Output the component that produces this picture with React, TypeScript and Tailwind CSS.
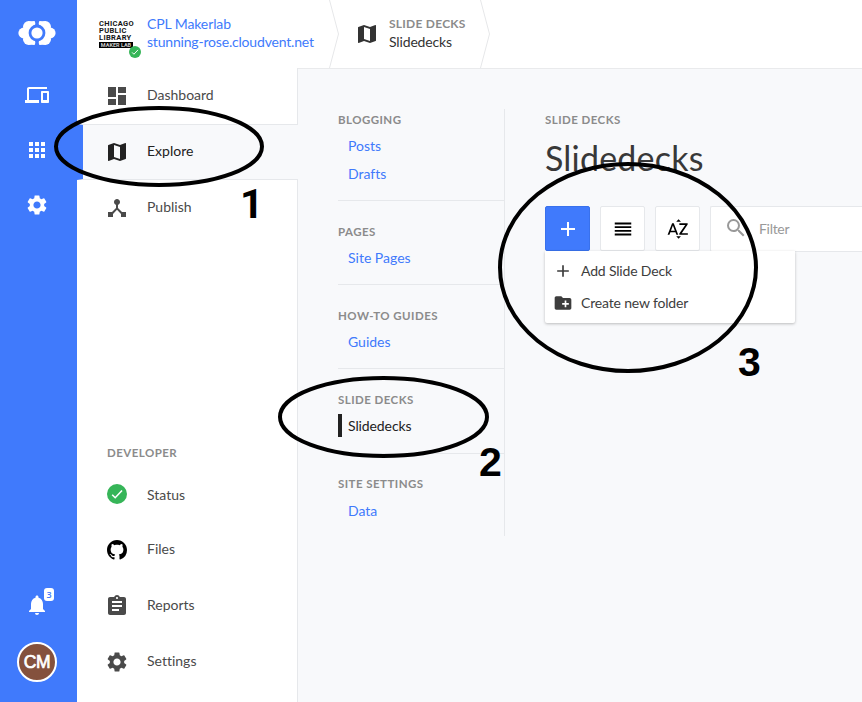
import type { ReactNode } from "react";
import {
  MdAdd,
  MdApps,
  MdAssignment,
  MdCreateNewFolder,
  MdDashboard,
  MdDeviceHub,
  MdDevices,
  MdNotifications,
  MdReorder,
  MdSearch,
  MdSettings,
  MdSortByAlpha,
} from "react-icons/md";

function Logo() {
  return (
    <svg width="38" height="26" viewBox="0 0 38 26">
      <g fill="#fff">
        <circle cx="5.8" cy="13" r="5.4" />
        <circle cx="10.8" cy="6.8" r="5.8" />
        <circle cx="10.8" cy="19.2" r="5.8" />
        <path d="M10 1.4L16.5 1l1.500 2.500L16 7v12l2 3.500-1.500 2.500-6.500-.4L5 13z" />
        <circle cx="32.2" cy="13" r="5.4" />
        <circle cx="27.2" cy="6.8" r="5.8" />
        <circle cx="27.2" cy="19.2" r="5.8" />
        <path d="M28 1.4L21.5 1 20 3.500 22 7v12l-2 3.500 1.500 2.500 6.500-.4L33 13z" />
      </g>
      <circle cx="19" cy="13" r="8.4" fill="#407afc" />
      <path d="M19 0v5M19 21v5" stroke="#407afc" strokeWidth="3.4" />
      <circle cx="19" cy="13" r="5.6" fill="#fff" />
    </svg>
  );
}

function MapIcon() {
  return (
    <svg width="24" height="24" viewBox="0 0 24 24" fill="currentColor" className="shrink-0">
      <path d="M20.5 3l-.16.03L15 5.1 9 3 3.36 4.9c-.21.07-.36.25-.36.48V20.5c0 .28.22.5.5.5l.16-.03L9 18.9l6 2.1 5.64-1.9c.21-.07.36-.25.36-.48V3.5c0-.28-.22-.5-.5-.5zM15 19l-6-2.110V5l6 2.110V19z" />
    </svg>
  );
}

function Github() {
  return (
    <svg width="20" height="20" viewBox="0 0 16 16" fill="#000">
      <path d="M8 0C3.58 0 0 3.58 0 8c0 3.54 2.29 6.53 5.47 7.59.4.07.55-.17.55-.38 0-.19-.01-.82-.01-1.49-2.01.37-2.53-.49-2.69-.94-.09-.23-.48-.94-.82-1.13-.28-.15-.68-.52-.01-.53.63-.01 1.08.58 1.23.82.72 1.21 1.87.87 2.33.66.07-.52.28-.87.51-1.07-1.78-.2-3.64-.89-3.64-3.95 0-.87.31-1.59.82-2.15-.08-.2-.36-1.02.08-2.12 0 0 .67-.21 2.2.82.64-.18 1.32-.27 2-.27s1.36.09 2 .27c1.53-1.04 2.2-.82 2.2-.82.44 1.1.16 1.92.08 2.12.51.56.82 1.27.82 2.15 0 3.07-1.87 3.75-3.65 3.95.29.25.54.73.54 1.48 0 1.07-.01 1.93-.01 2.2 0 .21.15.46.55.38A8.01 8.01 0 0016 8c0-4.42-3.58-8-8-8z" />
    </svg>
  );
}

function Check({ size }: { size: number }) {
  return (
    <svg width={size} height={size} viewBox="0 0 20 20">
      <circle cx="10" cy="10" r="10" fill="#36b558" />
      <path d="M5.2 10.7l3 3 6.8-7.2" fill="none" stroke="#fff" strokeWidth="1.6" />
    </svg>
  );
}

function Rail() {
  return (
    <aside className="flex w-[77px] shrink-0 flex-col items-center bg-[#407afc] pr-[3px] text-white">
      <div className="mt-5 flex h-[26px]"><Logo /></div>
      <MdDevices className="mt-[37px]" size={24} />
      <MdApps className="mt-[31px]" size={24} />
      <MdSettings className="mt-[31px]" size={24} />
      <div className="relative mt-auto mb-[25px]">
        <MdNotifications size={24} />
        <span className="absolute -top-[5px] left-[19px] flex h-[13px] w-[10px] items-center justify-center rounded-[3px] bg-white font-['Open_Sans',sans-serif] text-[9px] font-semibold text-[#407afc]">3</span>
      </div>
      <div className="mb-5 flex size-10 items-center justify-center rounded-full border-2 border-white bg-[#84513d] font-['Liberation_Sans',sans-serif] text-[17.5px] tracking-[-0.4px] [-webkit-text-stroke:0.7px_white]">CM</div>
    </aside>
  );
}

function Chevron() {
  return (
    <svg width="11" height="68" viewBox="0 0 11 68" className="shrink-0">
      <path d="M.5 0l9 34-9 34" fill="none" stroke="#e6e7e9" />
    </svg>
  );
}

function Header() {
  return (
    <header className="flex h-[69px] shrink-0 border-b border-[#e9eaec] bg-white">
      <div className="relative ml-[22px] w-12 pt-[19.5px] font-['Roboto',sans-serif] text-[7.5px] leading-[7.2px] font-bold tracking-[0.35px] text-[#151515]">
        <div>CHICAGO</div>
        <div>PUBLIC</div>
        <div>LIBRARY</div>
        <div className="mt-px w-[34px] bg-black text-center text-[5.5px] leading-[6px] tracking-normal whitespace-nowrap text-[#ccc]">MAKER LAB</div>
        <div className="absolute top-[46px] left-[30px]"><Check size={12} /></div>
      </div>
      <div className="w-[182px] pt-[15px] text-[14px] leading-[18px] text-[#407afc]">
        <div className="tracking-[-0.1px]">CPL Makerlab</div>
        <div className="tracking-[-0.19px]">stunning-rose.cloudvent.net</div>
      </div>
      <Chevron />
      <div className="mt-[22px] ml-[15px] text-[#333]"><MapIcon /></div>
      <div className="ml-[10px] w-[91px] pt-[15px] leading-[18px]">
        <div className="text-[12px] font-bold tracking-[0.25px] text-[#8b8b8b]">SLIDE DECKS</div>
        <div className="text-[14px] tracking-[-0.15px] text-[#333]">Slidedecks</div>
      </div>
      <Chevron />
    </header>
  );
}

function NavItem({ icon, label, active }: { icon: ReactNode; label: string; active?: boolean }) {
  return (
    <div
      className={
        active
          ? "flex h-14 items-center border-y border-l-[6px] border-y-[#e6e8eb] border-l-[#407afc] bg-[#f8f9fb] pl-[22px] text-[#222]"
          : "flex h-14 items-center border-r border-[#e6e8eb] pl-7 text-[#4a4a4a]"
      }
    >
      <span className="flex w-6 justify-center">{icon}</span>
      <span className={label === "Status" ? "-mt-0.5 ml-[18px] text-[14px]" : "-mt-[3px] ml-[18px] text-[14px]"}>{label}</span>
    </div>
  );
}

function Sidebar() {
  return (
    <nav className="flex w-[221px] shrink-0 flex-col bg-white">
      <NavItem icon={<MdDashboard size={24} />} label="Dashboard" />
      <NavItem icon={<MapIcon />} label="Explore" active />
      <NavItem icon={<MdDeviceHub size={24} />} label="Publish" />
      <div className="flex grow flex-col justify-end border-r border-[#e6e8eb] pb-3">
        <div className="mb-[6px] pl-[30px] text-[11.5px] leading-4 font-bold tracking-[0.45px] text-[#8b8b8b]">DEVELOPER</div>
        <div className="-mr-px">
          <NavItem icon={<div className="-mt-0.5"><Check size={20} /></div>} label="Status" />
          <div className="-mt-px"><NavItem icon={<Github />} label="Files" /></div>
          <NavItem icon={<MdAssignment size={24} />} label="Reports" />
          <NavItem icon={<MdSettings size={24} />} label="Settings" />
        </div>
      </div>
    </nav>
  );
}

const groups = [
  { title: "BLOGGING", items: ["Posts", "Drafts"], box: "h-[92px] border-b pt-[3px]" },
  { title: "PAGES", items: ["Site Pages"], box: "h-[84px] border-b pt-[23px]" },
  { title: "HOW-TO GUIDES", items: ["Guides"], box: "h-[84px] border-b pt-[23px]" },
  { title: "SLIDE DECKS", items: ["Slidedecks"], box: "h-[85px] border-b pt-[23px]" },
  { title: "SITE SETTINGS", items: ["Data"], box: "pt-[22px]" },
];

function Collections() {
  return (
    <section className="mt-[41px] ml-10 h-[427px] w-[167px] shrink-0 border-r border-[#e6e8eb]">
      {groups.map((g) => (
        <div key={g.title} className={`border-[#e6e8eb] ${g.box}`}>
          <h2 className="text-[11.5px] leading-4 font-bold tracking-[0.45px] text-[#8b8b8b]">{g.title}</h2>
          <div className={g.title === "SITE SETTINGS" ? "mt-1" : "mt-[3px]"}>
            {g.items.map((item) => (
              <div key={item} className="flex h-7 items-center text-[14px]">
                {item === "Slidedecks" ? (
                  <span className="flex h-[23px] items-center border-l-4 border-[#222] pl-[6px] tracking-[-0.1px] text-[#222]">{item}</span>
                ) : (
                  <a className="pl-[10px] text-[#407afc]">{item}</a>
                )}
              </div>
            ))}
          </div>
        </div>
      ))}
    </section>
  );
}

function Content() {
  return (
    <main className="relative w-[358px] shrink-0 pt-[44px] pl-10">
      <div className="text-[11.5px] leading-4 font-bold tracking-[0.45px] text-[#8b8b8b]">SLIDE DECKS</div>
      <h1 className="mt-[10px] text-[34px] leading-[40px] tracking-[0.2px] text-[#383838]">Slidedecks</h1>
      <div className="mt-[28px] flex h-[45px] gap-[10px]">
        <button className="flex size-[45px] shrink-0 items-center justify-center rounded-[2px] border border-[#3971ec] bg-[#407afc] text-white"><MdAdd size={24} /></button>
        <button className="flex size-[45px] shrink-0 items-center justify-center rounded-[2px] border border-[#e6e8eb] bg-white text-black"><MdReorder size={22} /></button>
        <button className="flex size-[45px] shrink-0 items-center justify-center rounded-[2px] border border-[#e6e8eb] bg-white text-black"><MdSortByAlpha size={24} /></button>
        <div className="flex h-[46px] grow items-center rounded-l-[2px] border border-r-0 border-[#e6e8eb] bg-white pl-[13px] text-[14px] tracking-[-0.3px] text-[#999]">
          <MdSearch className="mr-[11px] mb-[2px]" size={24} />
          <span className="-mt-0.5">Filter</span>
        </div>
      </div>
      <div className="absolute top-[183px] left-10 h-[72px] w-[250px] rounded-b-[2px] bg-white pt-1 text-[14px] tracking-[-0.17px] text-[#3d3d3d] shadow-[0_1px_3px_rgba(0,0,0,0.25)]">
        <div className="flex h-8 items-center gap-2 pl-2"><MdAdd size={20} /><span className="-mt-0.5">Add Slide Deck</span></div>
        <div className="flex h-8 items-center gap-2 pl-2"><MdCreateNewFolder size={20} /><span className="-mt-0.5">Create new folder</span></div>
      </div>
    </main>
  );
}

function Annotations() {
  return (
    <div className="pointer-events-none absolute inset-0 text-[41px] leading-[40px] font-bold text-black">
      <svg width="862" height="702" className="absolute inset-0" fill="none" stroke="#000" strokeWidth="4">
        <ellipse cx="159" cy="146.5" rx="103" ry="38.5" />
        <ellipse cx="383.5" cy="417" rx="103.5" ry="39" />
        <ellipse cx="628" cy="267.5" rx="128" ry="103.5" />
      </svg>
      <span className="absolute top-[184px] left-[240px] font-['Roboto',sans-serif]">1</span>
      <span className="absolute top-[442px] left-[479px] font-['Liberation_Sans',sans-serif]">2</span>
      <span className="absolute top-[342px] left-[738px] font-['Liberation_Sans',sans-serif]">3</span>
    </div>
  );
}

export default function App() {
  return (
    <div className="relative flex h-[702px] w-[862px] overflow-hidden bg-[#f8f9fb] font-['Lato',sans-serif] [font-variant-ligatures:none]">
      <Rail />
      <div className="flex min-w-0 grow flex-col">
        <Header />
        <div className="-mt-px flex grow">
          <Sidebar />
          <Collections />
          <Content />
        </div>
      </div>
      <Annotations />
    </div>
  );
}
